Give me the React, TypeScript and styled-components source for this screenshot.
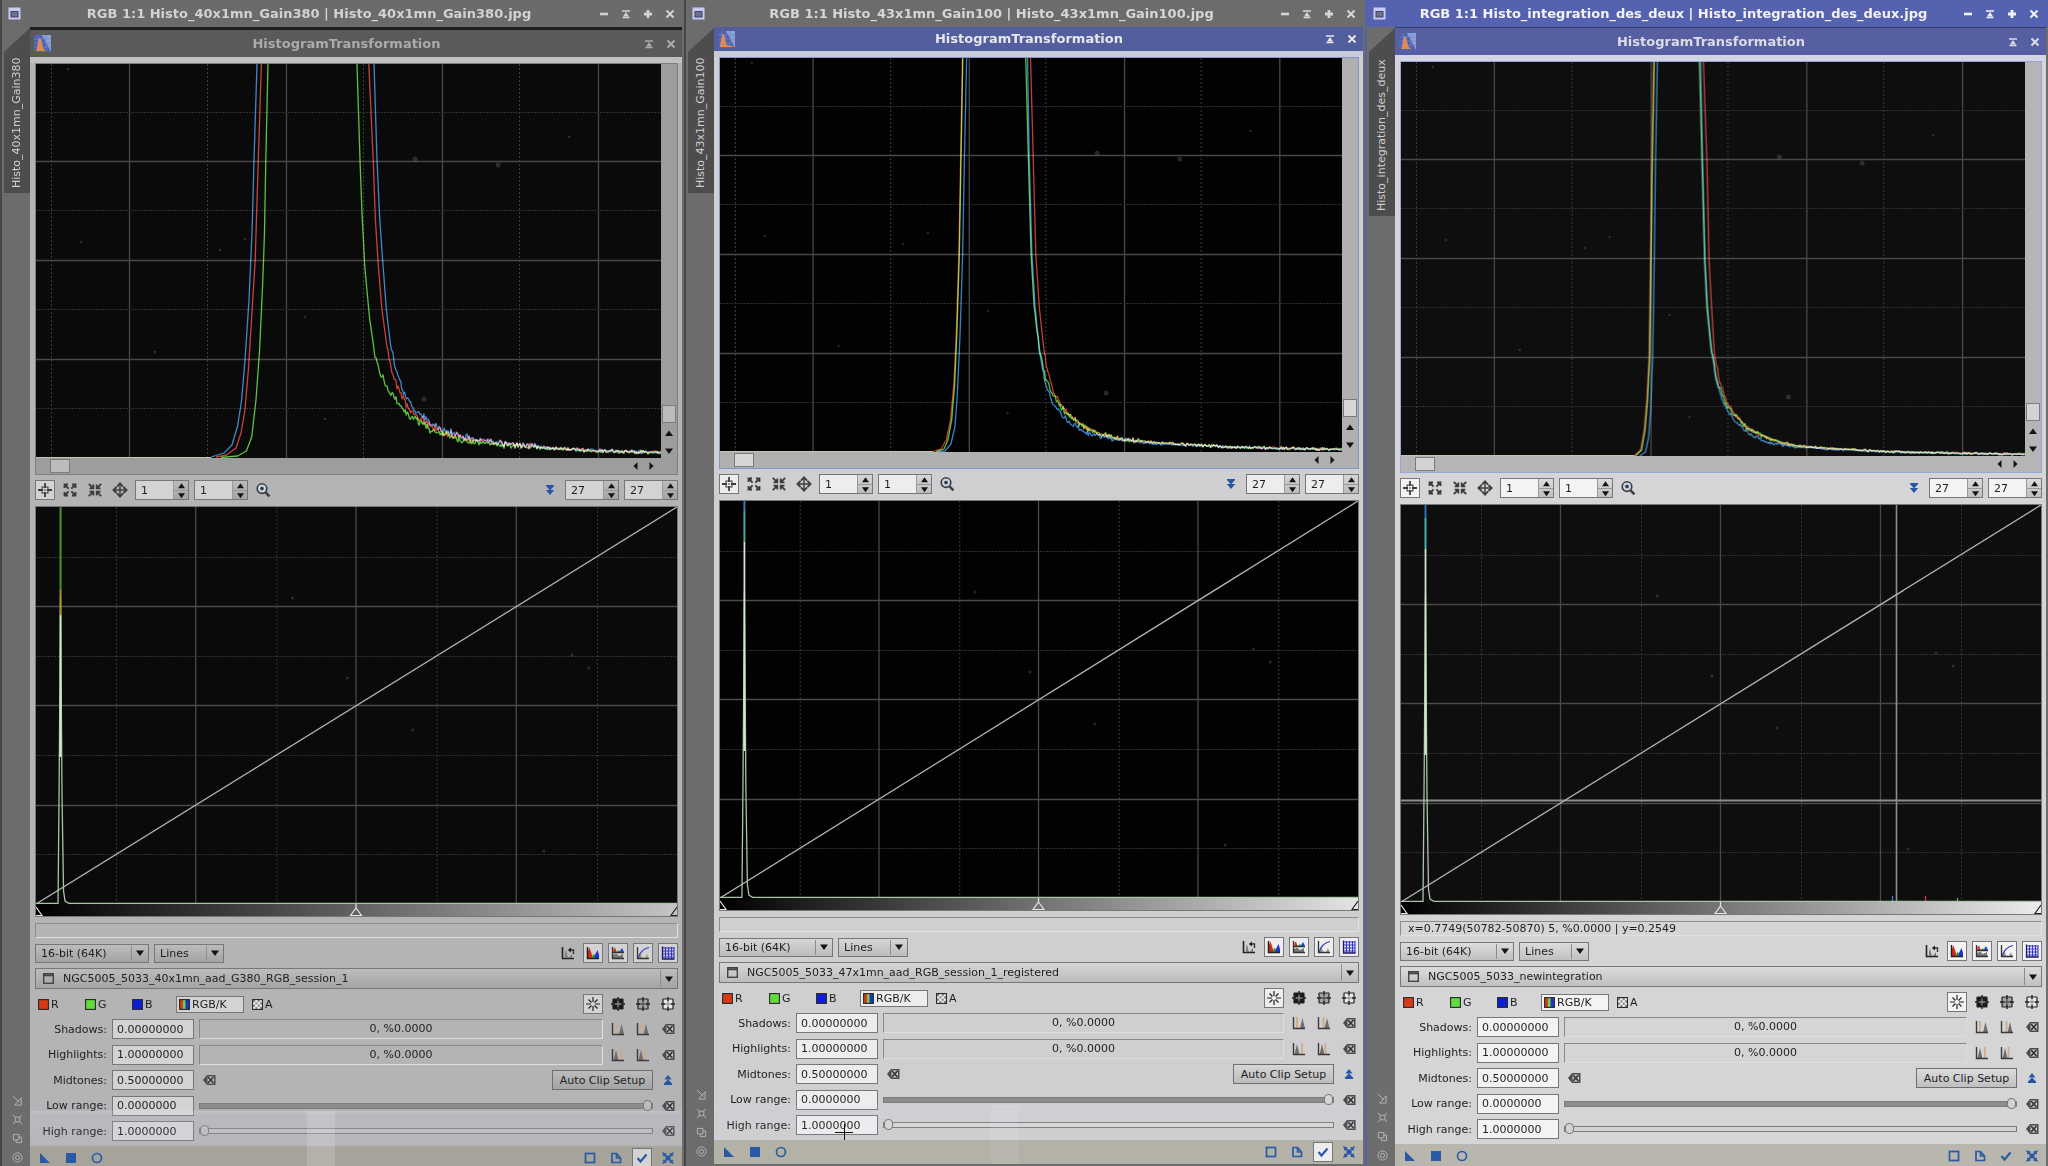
import React, { useId, useState } from "react";
import styled, { createGlobalStyle, ThemeProvider } from "styled-components";

/* ---------- themes ---------- */

type Skin = {
  bar: string;
  barText: string;
  barLine: string;
  sub: string;
  subText: string;
  panel: string;
  panelTop: string;
  frame: string;
  scroll: string;
  thumb: string;
  field: string;
  plot: string;
  footer: string;
  edge: string;
  strip: string;
  text: string;
  grad: string;
  btn: string;
};

const dim: Skin = {
  bar: "#6b6b6b",
  barText: "#d2d2d2",
  barLine: "#1d1d1d",
  sub: "#5a5a5a",
  subText: "#ababab",
  panel: "#b4b4b6",
  panelTop: "#c0c0c2",
  frame: "#7e7e80",
  scroll: "#9d9d9d",
  thumb: "#bcbcbc",
  field: "#d3d3d4",
  plot: "#0a0a0b",
  footer: "#a6a39b",
  edge: "#474747",
  strip: "#6c6c6c",
  text: "#1e1e1e",
  grad: "#c4c4c4",
  btn: "linear-gradient(#bcbcbd, #a4a4a5)",
};

const mid: Skin = {
  bar: "#6c6c6c",
  barText: "#d6d6d6",
  barLine: "#5e5e5e",
  sub: "#525e9d",
  subText: "#e6e6ec",
  panel: "#cfcfd1",
  panelTop: "#c9cbdb",
  frame: "#8095c8",
  scroll: "#b0b0b0",
  thumb: "#d6d6d6",
  field: "#ededee",
  plot: "#020203",
  footer: "#b4b1a6",
  edge: "#474747",
  strip: "#6c6c6c",
  text: "#1e1e1e",
  grad: "#e4e4e4",
  btn: "linear-gradient(#d6d6d7, #bcbcbd)",
};

const bright: Skin = {
  bar: "#5462b0",
  barText: "#f2f2f6",
  barLine: "#33396a",
  sub: "#555fa2",
  subText: "#dcdce6",
  panel: "#d5d5d7",
  panelTop: "#d3d5e2",
  frame: "#93a9da",
  scroll: "#b5b5b5",
  thumb: "#d3d3d3",
  field: "#f3f3f4",
  plot: "#0e0e0f",
  footer: "#b8b6ad",
  edge: "#5560a6",
  strip: "#6d6d6d",
  text: "#1e1e1e",
  grad: "#ececec",
  btn: "linear-gradient(#dcdcdd, #c0c0c1)",
};

type T = { theme: Skin };

/* ---------- styled parts ---------- */

const GlobalStyle = createGlobalStyle`
  *, *::before, *::after { box-sizing: border-box; }
  html, body { margin: 0; height: 100%; background: #6b6b6b; overflow: hidden; }
  body, button, input, select { font-family: "DejaVu Sans", Verdana, sans-serif; font-size: 11px; }
  button { padding: 0; margin: 0; cursor: default; color: inherit; }
  svg { display: block; flex: none; }
`;

const Desktop = styled.main`
  display: grid;
  grid-template-columns: 684fr 681fr 683fr;
  height: 100vh;
  overflow: hidden;
`;

const Window = styled.section<{ $end: number }>`
  display: flex;
  flex-direction: column;
  min-width: 0;
  height: max-content;
  background: ${(p: T) => p.theme.strip};
  border-left: 2px solid ${(p: T) => p.theme.edge};
  padding-bottom: ${(p) => p.$end}px;
  color: ${(p: T) => p.theme.text};
`;

const TitleBar = styled.header`
  display: flex;
  align-items: center;
  height: 27px;
  padding: 0 7px 0 6px;
  background: ${(p: T) => p.theme.bar};
  color: ${(p: T) => p.theme.barText};
`;

const TitleText = styled.h1`
  flex: 1;
  margin: 0;
  font-size: 13px;
  line-height: 16px;
  font-weight: bold;
  text-align: center;
  white-space: nowrap;
`;

const TitleButtons = styled.div`
  display: flex;
  gap: 8px;
`;

const BareButton = styled.button`
  display: flex;
  align-items: center;
  justify-content: center;
  width: 14px;
  height: 14px;
  border: 0;
  background: none;
`;

const Body = styled.div`
  display: flex;
  flex: 1;
  align-items: stretch;
`;

const SideStrip = styled.aside`
  display: flex;
  flex: none;
  flex-direction: column;
  justify-content: space-between;
  align-items: center;
  width: 28px;
  padding: 1px 0 6px 2px;
  color: #b9b9b9;
`;

const SideTab = styled.div<{ $long?: boolean }>`
  display: flex;
  align-items: center;
  align-self: stretch;
  justify-content: flex-start;
  height: ${(p) => (p.$long ? 188 : 165)}px;
  padding: 5px 0 0;
  writing-mode: vertical-rl;
  transform: rotate(180deg);
  background: #4d4d4d;
  clip-path: polygon(0 0, 100% 0, 100% calc(100% - 24px), 0 100%);
  color: #d0d0d0;
  line-height: 14px;
  white-space: nowrap;
`;

const SideIcons = styled.div`
  display: flex;
  flex-direction: column;
  align-items: center;
  gap: 5px;
`;

const Tool = styled.div<{ $line: number }>`
  position: relative;
  display: flex;
  flex: 1;
  flex-direction: column;
  min-width: 0;
  margin-right: 2px;
  border-top: ${(p) => p.$line}px solid ${(p: T) => p.theme.barLine};
  background: ${(p: T) => p.theme.panel};
`;

const SubBar = styled.header<{ $h: number }>`
  display: flex;
  align-items: center;
  height: ${(p) => p.$h}px;
  padding: 0 4px 0 4px;
  background: ${(p: T) => p.theme.sub};
  color: ${(p: T) => p.theme.subText};
`;

const SubTitle = styled.h2`
  flex: 1;
  margin: 0;
  font-size: 13px;
  line-height: 16px;
  font-weight: bold;
  text-align: center;
`;

const Content = styled.div`
  display: flex;
  flex-direction: column;
  gap: 5px;
  padding: 6px 4px 5px 5px;
  background: linear-gradient(${(p: T) => p.theme.panelTop} 6px, transparent 6px);
`;

const ScrollFrame = styled.div`
  display: grid;
  grid-template-columns: 1fr 16px;
  border: 1px solid ${(p: T) => p.theme.frame};
  background: ${(p: T) => p.theme.scroll};
`;

const PlotArea = styled.div<{ $h: number }>`
  min-width: 0;
  height: ${(p) => p.$h}px;
  background: ${(p: T) => p.theme.plot};
`;

const VScroll = styled.div`
  display: flex;
  flex-direction: column;
  justify-content: flex-end;
  align-items: center;
`;

const HScroll = styled.div`
  display: flex;
  grid-column: 1 / -1;
  align-items: center;
  justify-content: space-between;
  height: 16px;
  padding: 0 18px 0 14px;
`;

const Knob = styled.div<{ $w: number; $h: number }>`
  width: ${(p) => p.$w}px;
  height: ${(p) => p.$h}px;
  border: 1px solid #7c7c7c;
  background: ${(p: T) => p.theme.thumb};
`;

const ArrowPair = styled.div<{ $col?: boolean }>`
  display: flex;
  flex-direction: ${(p) => (p.$col ? "column" : "row")};
  gap: ${(p) => (p.$col ? 4 : 3)}px;
  margin-top: ${(p) => (p.$col ? 3 : 0)}px;
`;

const Row = styled.div`
  display: flex;
  align-items: center;
  gap: 5px;
  height: 20px;
`;

const Spacer = styled.div`
  flex: 1;
`;

const IconButton = styled.button<{ $on?: boolean }>`
  display: flex;
  align-items: center;
  justify-content: center;
  flex: none;
  width: 20px;
  height: 20px;
  border: 1px solid ${(p) => (p.$on ? "#77777a" : "transparent")};
  background: ${(p) => (p.$on ? (p.theme as Skin).field : "none")};
`;

const SpinBox = styled.div`
  display: flex;
  flex: none;
  width: 54px;
  height: 20px;
  border: 1px solid #77777a;
  background: ${(p: T) => p.theme.field};
`;

const SpinInput = styled.input`
  flex: 1;
  min-width: 0;
  padding: 0 5px;
  border: 0;
  outline: 0;
  background: none;
  color: ${(p: T) => p.theme.text};
`;

const SpinButtons = styled.div`
  display: grid;
  width: 15px;
  grid-template-rows: 1fr 1fr;
  border-left: 1px solid #9a9a9a;
  background: ${(p: T) => p.theme.btn};
`;

const SpinStep = styled.button`
  display: flex;
  align-items: center;
  justify-content: center;
  border: 0;
  background: none;
  & + & {
    border-top: 1px solid #9a9a9a;
  }
`;

const MainPlot = styled.div`
  display: flex;
  flex-direction: column;
  margin: 1px 0 1px 0;
  border: 1px solid #77777a;
`;

const Ramp = styled.div`
  height: 12px;
  background: linear-gradient(90deg, #000, ${(p: T) => p.theme.grad});
`;

const Status = styled.output`
  display: block;
  height: 15px;
  padding: 0 7px;
  border: 1px solid;
  border-color: #8c8c8e #e0e0e2 #e0e0e2 #8c8c8e;
  font-size: 11px;
  line-height: 13px;
  white-space: nowrap;
`;

const SelectWrap = styled.div<{ $w?: number }>`
  position: relative;
  display: flex;
  height: ${(p) => (p.$w ? 19 : 21)}px;
  width: ${(p) => (p.$w ? p.$w + "px" : "auto")};
`;

const Select = styled.select<{ $pad: number }>`
  flex: 1;
  appearance: none;
  min-width: 0;
  padding: 0 20px 0 ${(p) => p.$pad}px;
  border: 1px solid #77777a;
  border-radius: 0;
  background: ${(p: T) => p.theme.btn};
  color: ${(p: T) => p.theme.text};
`;

const SelectArrow = styled.span`
  position: absolute;
  top: 2px;
  right: 1px;
  bottom: 2px;
  display: flex;
  align-items: center;
  justify-content: center;
  width: 17px;
  border-left: 1px solid #8c8c8c;
  pointer-events: none;
`;

const SelectIcon = styled.span`
  position: absolute;
  top: 5px;
  left: 8px;
  pointer-events: none;
`;

const Channels = styled.div`
  display: flex;
  align-items: center;
`;

const Channel = styled.button<{ $on?: boolean; $w: number }>`
  display: flex;
  align-items: center;
  gap: 2px;
  width: ${(p) => p.$w}px;
  height: 17px;
  padding-left: 2px;
  border: 1px solid ${(p) => (p.$on ? "#77777a" : "transparent")};
  background: ${(p) => (p.$on ? (p.theme as Skin).field : "none")};
`;

const Params = styled.div`
  display: flex;
  flex-direction: column;
  justify-content: space-between;
  min-height: 122px;
`;

const ParamLabel = styled.label`
  flex: none;
  width: 72px;
  text-align: right;
  white-space: nowrap;
`;

const ParamInput = styled.input`
  flex: none;
  width: 82px;
  height: 20px;
  padding: 0 4px;
  border: 1px solid #77777a;
  outline: 0;
  background: ${(p: T) => p.theme.field};
  color: ${(p: T) => p.theme.text};
`;

const Readout = styled.div`
  flex: 1;
  height: 20px;
  border: 1px solid;
  border-color: #88888a #dedee0 #dedee0 #88888a;
  line-height: 18px;
  text-align: center;
`;

const ClipButton = styled.button`
  width: 101px;
  height: 20px;
  border: 1px solid #6e6e70;
  background: ${(p: T) => p.theme.btn};
`;

const Slider = styled.input<{ $full?: boolean }>`
  flex: 1;
  min-width: 0;
  height: 12px;
  margin: 0;
  appearance: none;
  background: none;
  &::-webkit-slider-runnable-track {
    height: 6px;
    border: 1px solid #7c7c7e;
    background: ${(p) => (p.$full ? "#8c8c8d" : (p.theme as Skin).thumb)};
  }
  &::-webkit-slider-thumb {
    appearance: none;
    width: 9px;
    height: 11px;
    margin-top: -4px;
    border: 1px solid #77777a;
    border-radius: 4px;
    background: ${(p: T) => p.theme.thumb};
  }
`;

const Footer = styled.footer`
  display: flex;
  align-items: center;
  gap: 6px;
  height: 24px;
  padding: 0 4px 0 5px;
  background: ${(p: T) => p.theme.footer};
`;

const Ghost = styled.div<{ $faint?: boolean }>`
  position: absolute;
  right: 0;
  bottom: 0;
  left: 0;
  height: 59px;
  opacity: ${(p) => (p.$faint ? 0.5 : 1)};
  pointer-events: none;
  background:
    linear-gradient(rgba(255, 255, 255, 0.16), rgba(255, 255, 255, 0.16)) 277px 0 / 28px 100% no-repeat,
    linear-gradient(rgba(225, 225, 255, 0.3), rgba(225, 225, 255, 0.12) 4px, rgba(225, 225, 255, 0.06) 36px, transparent 36px);
`;

const Pointer = styled.svg`
  position: absolute;
  left: 121px;
  bottom: 23px;
  pointer-events: none;
`;

/* ---------- icons ---------- */

const Tri = ({ d, s = 8 }: { d: "up" | "down" | "left" | "right"; s?: number }) => {
  const shape = {
    up: "0,7 4,1.5 8,7",
    down: "0,1.5 4,7 8,1.5",
    left: "6.5,0 2.5,4 6.5,8",
    right: "1.5,0 5.5,4 1.5,8",
  }[d];
  return (
    <svg width={s} height={s} viewBox="0 0 8 8">
      <polygon points={shape} fill="#141414" />
    </svg>
  );
};

const Minimize = () => (
  <svg width="12" height="12" viewBox="0 0 12 12"><path d="M2 6h8" stroke="currentColor" strokeWidth="2.6" /></svg>
);
const Shade = () => (
  <svg width="12" height="12" viewBox="0 0 12 12">
    <path d="M2 3h8M2.5 9.5h7" stroke="currentColor" strokeWidth="1.6" /><path d="M6 4l3 4.500H3z" fill="currentColor" />
  </svg>
);
const Plus = () => (
  <svg width="12" height="12" viewBox="0 0 12 12"><path d="M2 6h8M6 2v8" stroke="currentColor" strokeWidth="2.8" /></svg>
);
const Close = () => (
  <svg width="12" height="12" viewBox="0 0 12 12"><path d="M2.5 2.500l7 7M9.5 2.500l-7 7" stroke="currentColor" strokeWidth="2" /></svg>
);

const WindowMark = () => (
  <svg width="13" height="13" viewBox="0 0 13 13">
    <rect x="0.5" y="0.5" width="12" height="12" fill="#c9cbf4" />
    <rect x="3" y="4.5" width="7" height="5.5" fill="#70728c" stroke="#3f4166" strokeWidth="1" />
  </svg>
);

const ToolMark = ({ tail }: { tail?: boolean }) => (
  <svg width="17" height="17" viewBox="0 0 17 17">
    <rect width="17" height="17" fill="#4a5fb0" />
    <path d="M8 0h9v17z" fill="#8ea2d8" />
    <path d="M0 4h17M0 8h17M0 12h17M4 0v17M8 0v17M12 0v17" stroke="#7384c6" strokeWidth="0.7" />
    <path
      d={tail ? "M1 16C3 15 3 4 5 3s2 9 4 11l6 1v1z" : "M2 16C4 13 4 4 5.5 3S8 9 9 12s2 3 3 4z"}
      fill="#e08a55"
    />
  </svg>
);

const ink = "#3c3c3e";

const Crosshair = () => (
  <svg width="16" height="16" viewBox="0 0 16 16" fill="none" stroke={ink}>
    <path d="M8 1v5M8 10v5M1 8h5M10 8h5" strokeWidth="1.8" />
    <rect x="5" y="5" width="6" height="6" strokeWidth="1" />
    <rect x="7.3" y="7.3" width="1.4" height="1.4" fill={ink} stroke="none" />
  </svg>
);
const ZoomOutArrows = () => (
  <svg width="14" height="14" viewBox="0 0 14 14" fill="none" stroke={ink} strokeWidth="1.800">
    <path d="M1.5 5V1.500H5M9 1.500h3.500V5M12.500 9v3.500H9M5 12.500H1.500V9M2 2l3.600 3.600M12 2L8.400 5.600M12 12L8.400 8.400M2 12l3.600-3.600" />
  </svg>
);
const ZoomInArrows = () => (
  <svg width="14" height="14" viewBox="0 0 14 14" fill="none" stroke={ink} strokeWidth="1.800">
    <path d="M1.500 5.300h3.800V1.500M8.700 1.500v3.800h3.800M12.500 8.700H8.700v3.800M5.300 12.500V8.700H1.500M.8.8l4 4M13.200.8l-4 4M13.200 13.200l-4-4M.8 13.200l4-4" />
  </svg>
);
const Pan = () => (
  <svg width="16" height="16" viewBox="0 0 16 16" fill="none" stroke={ink}>
    <path d="M8 3v10M3 8h10" strokeWidth="1.4" />
    <path d="M5 4.600L8 1.400l3 3.200M5 11.400l3 3.200 3-3.200M4.600 5L1.400 8l3.200 3M11.400 5l3.200 3-3.200 3" strokeWidth="1.800" />
  </svg>
);
const Magnifier = () => (
  <svg width="16" height="16" viewBox="0 0 16 16" fill="none">
    <circle cx="7" cy="6.600" r="4.800" stroke={ink} strokeWidth="1.600" fill="#c9d3dd" />
    <circle cx="7" cy="6.600" r="1.800" fill="#26364e" />
    <path d="M10.600 10.400l3.800 4" stroke={ink} strokeWidth="2.400" />
  </svg>
);
const DoubleArrow = ({ up }: { up?: boolean }) => (
  <svg width="12" height="12" viewBox="0 0 12 12" fill="#2456a4">
    <path d={up ? "M6 1l3.500 4.500h-7zM6 5.500l4.500 4.500h-9zM2 10h8v1H2z" : "M2 1h8v1H2zM2 2h8L6 6.500zM1.800 6h8.400L6 11z"} />
  </svg>
);

const AxisRestore = () => (
  <svg width="14" height="14" viewBox="0 0 14 14" fill="none">
    <path d="M1.500 1v11.500H13" stroke="#222" strokeWidth="1.600" />
    <path d="M4 12V8l1-4 1 5 1 3zM8 12l3-4v4z" fill="#777" />
    <path d="M12.500 8V4H9" stroke="#333" strokeWidth="1.400" /><path d="M10 1.500v5L6.800 4z" fill="#222" />
  </svg>
);
const RgbHisto = () => (
  <svg width="14" height="14" viewBox="0 0 14 14">
    <path d="M2 12V5l1.500-3.500L6 9l1 3z" fill="#d42a18" /><path d="M6 12l1-4 2 1 1 3z" fill="#27a32b" />
    <path d="M8.500 12l.5-3 2.500-5 1.500 5v3z" fill="#1c32d8" />
    <path d="M1.500 1v11.500H13" stroke="#222" strokeWidth="1.500" fill="none" />
  </svg>
);
const SplitHisto = () => (
  <svg width="14" height="14" viewBox="0 0 14 14">
    <path d="M2.500 6V3L4 1.500 5.500 6z" fill="#d42a18" /><path d="M5.500 6L8 4l1 2z" fill="#27a32b" />
    <path d="M8.500 6L11 2l2 4z" fill="#1c46d8" />
    <path d="M2 12V9l3-1.500L8 10l4-2v4z" fill="#777" />
    <path d="M1.500 1v11.500H13M2 6.500h11" stroke="#333" strokeWidth="1.300" fill="none" />
  </svg>
);
const CurveHisto = () => (
  <svg width="14" height="14" viewBox="0 0 14 14" fill="none">
    <path d="M3 12V8l1.500-2L6 12zM9 12l2-4 1.500 4z" fill="#9b9b8c" />
    <path d="M2 12C4 6 8 2.500 13 1.500" stroke="#3546c4" strokeWidth="1.200" />
    <path d="M1.500 1v11.500H13" stroke="#333" strokeWidth="1.300" />
  </svg>
);
const GridIcon = () => (
  <svg width="14" height="14" viewBox="0 0 14 14" fill="none">
    <path d="M4.500 1v12M7.500 1v12M10.500 1v12M13 1v12M1 2h12M1 5h12M1 8h12M1 11h12" stroke="#3436c8" strokeWidth="1.100" />
    <path d="M1.500 0.500v12.500H13.500" stroke="#1c1c60" strokeWidth="1.300" />
  </svg>
);

const Burst = () => (
  <svg width="14" height="14" viewBox="0 0 14 14" stroke="#222" strokeWidth="1.200">
    <path d="M7 0v5M7 9v5M0 7h5M9 7h5M2.500 2.500l3 3M11.500 2.500l-3 3M11.500 11.500l-3-3M2.500 11.500l3-3" />
  </svg>
);
const Target = ({ fill, cross }: { fill: string; cross: string }) => (
  <svg width="14" height="14" viewBox="0 0 14 14">
    <rect x="2" y="2" width="10" height="10" rx="0.500" fill={fill} stroke="#222" strokeWidth="1.200" />
    <path d="M7 2.600v8.800M2.600 7h8.800" stroke={cross} strokeWidth="1.300" />
    <path d="M7 0v4M7 10V14M0 7h4M10 7H14" stroke="#222" strokeWidth="1.400" />
  </svg>
);

const ClipIcon = ({ x, peak }: { x: number; peak: number }) => (
  <svg width="14" height="14" viewBox="0 0 14 14" fill="none">
    <path d={`M${peak - 2.5} 12.500L${peak} 2l2.500 10.500z`} fill="#6e6e6e" />
    <path d={`M${x} 1v11.500`} stroke="#d3aa84" strokeWidth="1.800" />
    <path d="M1.500 1v11.500H13" stroke="#3a3a3a" strokeWidth="1.400" />
  </svg>
);

const ClearIcon = () => (
  <svg width="13" height="12" viewBox="0 0 13 12">
    <path d="M0 6l4-5h8.500v10H4z" fill="#4c4c4e" />
    <rect x="4.500" y="2.500" width="6.500" height="7" fill="#c9c9ca" />
    <path d="M5 3l5.500 6M10.500 3L5 9" stroke="#333" strokeWidth="1.700" />
  </svg>
);

const ImageMark = () => (
  <svg width="11" height="11" viewBox="0 0 11 11">
    <rect x="0.700" y="0.700" width="9.600" height="9.600" fill="none" stroke="#444" strokeWidth="1.400" />
    <path d="M1 2.300h9" stroke="#444" strokeWidth="2" />
  </svg>
);

const Swatch = ({ kind }: { kind: string }) => (
  <svg width="11" height="11" viewBox="0 0 11 11">
    {kind === "rgb" ? (
      <>
        <rect x="1" y="1" width="3" height="9" fill="#d83a1c" /><rect x="4" y="1" width="3" height="9" fill="#62d84a" />
        <rect x="6.500" y="1" width="3.500" height="9" fill="#1a34c8" />
      </>
    ) : kind === "alpha" ? (
      <>
        <rect x="1" y="1" width="9" height="9" fill="#f2f2f2" />
        {[0, 1, 2, 3].map((r) =>
          [0, 1, 2, 3].map((c) =>
            (r + c) % 2 ? null : <rect key={`${r}${c}`} x={1 + c * 2.3} y={1 + r * 2.3} width="2.200" height="2.200" fill="#8b8b8b" />
          )
        )}
      </>
    ) : (
      <rect x="1" y="1" width="9" height="9" fill={kind} />
    )}
    <rect x="0.600" y="0.600" width="9.800" height="9.800" fill="none" stroke="#262626" strokeWidth="1.100" />
  </svg>
);

const blue = "#2a5aa6";
const NewInstance = () => (
  <svg width="12" height="12" viewBox="0 0 12 12"><path d="M1 1v10h10z" fill={blue} /></svg>
);
const ApplyIcon = () => (
  <svg width="12" height="12" viewBox="0 0 12 12"><rect x="1" y="1" width="10" height="10" fill={blue} /></svg>
);
const PreviewIcon = () => (
  <svg width="12" height="12" viewBox="0 0 12 12"><circle cx="6" cy="6" r="4.500" fill="none" stroke={blue} strokeWidth="1.700" /></svg>
);
const BoxIcon = () => (
  <svg width="12" height="12" viewBox="0 0 12 12"><rect x="1.500" y="1.500" width="9" height="9" fill="none" stroke={blue} strokeWidth="1.700" /></svg>
);
const DocIcon = () => (
  <svg width="12" height="12" viewBox="0 0 12 12">
    <path d="M2 1.500h4.500L10.500 6v4.500H2zM6.500 1.500V6h4" fill="none" stroke={blue} strokeWidth="1.700" />
  </svg>
);
const CheckIcon = () => (
  <svg width="12" height="12" viewBox="0 0 12 12"><path d="M1.500 6l3 3.500 6-7" fill="none" stroke={blue} strokeWidth="2.200" /></svg>
);
const ResetIcon = () => (
  <svg width="14" height="14" viewBox="0 0 14 14">
    <rect x="4.500" y="4.500" width="5" height="5" fill={blue} />
    <path d="M2 4.500h2.500V2M9.500 2v2.500H12M12 9.500H9.500V12M4.500 12V9.500H2M1.500 1.500l3 3M12.500 1.500l-3 3M12.500 12.500l-3-3M1.500 12.500l3-3" fill="none" stroke={blue} strokeWidth="1.500" />
  </svg>
);

const sideShapes = [
  "M1 1l7 7M10 3v8H3M10 3L3 11",
  "M1 1l2.500 2.500M11 1L8.500 3.500M11 11L8.500 8.500M1 11l2.500-2.500M3.500 3.500h5v5h-5z",
  "M1.500 1.500h6v6h-6zM7.500 4.500h3v6h-6v-3",
];
const SideGlyphs = () => (
  <SideIcons>
    {sideShapes.map((d) => (
      <BareButton key={d} aria-label="Window option">
        <svg width="11" height="11" viewBox="0 0 12 12" fill="none" stroke="currentColor"><path d={d} /></svg>
      </BareButton>
    ))}
    <BareButton aria-label="Pin window">
      <svg width="11" height="11" viewBox="0 0 12 12" fill="none" stroke="currentColor">
        <circle cx="6" cy="6" r="5" /><circle cx="6" cy="6" r="2.300" />
      </svg>
    </BareButton>
  </SideIcons>
);

/* ---------- charts ---------- */

type Pt = [number, number];
type Curve = { color: string; left: Pt[]; right: Pt[]; seed: number };

const wobble = (i: number, seed: number) => {
  const v = Math.sin(i * 12.9898 + seed * 78.233) * 43758.5453;
  return (v - Math.floor(v)) * 2 - 1;
};

/* Straight in the steep part, one jittered sample per pixel in the tail. */
const trace = (pts: Pt[], seed: number, amp: number) => {
  let d = `M${pts[0][0]} ${pts[0][1]}`;
  for (let k = 1; k < pts.length; k++) {
    const [x0, y0] = pts[k - 1];
    const [x1, y1] = pts[k];
    if (y1 < 290 || x1 < x0 || amp === 0) {
      d += `L${x1} ${y1}`;
      continue;
    }
    const n = Math.max(1, Math.round(x1 - x0));
    for (let i = 1; i <= n; i++) {
      const x = x0 + ((x1 - x0) * i) / n;
      const y = y0 + ((y1 - y0) * i) / n;
      const a = amp * (y < 375 ? 1.2 : y < 383 ? 0.9 : 0.55);
      const shared = wobble(Math.round(x), 1) * 0.4;
      d += `L${x.toFixed(1)} ${(y + a * (shared + wobble(Math.round(x), seed) * 0.8)).toFixed(1)}`;
    }
  }
  return d;
};

const RED = "#c23c2c";
const GREEN = "#55bf38";
const BLUE = "#3a80c6";

const shots: Pt[] = [
  [32, 5], [379, 95], [462, 101], [533, 73], [45, 178], [209, 175], [184, 186], [269, 253], [388, 335], [289, 355], [119, 288],
];

const ZoomPlot = ({ curves, amp }: { curves: Curve[]; amp: number }) => (
  <svg width="100%" height="100%" viewBox="0 0 625 394" preserveAspectRatio="none" fill="none" role="img" aria-label="Input histogram">
    {[15, 171, 327, 483].map((x) => (
      <path key={x} d={`M${x}.5 0V394`} stroke="#3c3c3c" strokeDasharray="2 2" />
    ))}
    {[93, 250, 406, 562].map((x) => (
      <path key={x} d={`M${x}.5 0V394`} stroke="#484848" strokeWidth="1.300" />
    ))}
    {[48, 146, 245, 344].map((y) => (
      <path key={y} d={`M0 ${y}.5H625`} stroke="#303030" strokeDasharray="2 1" />
    ))}
    {[97, 196, 295].map((y) => (
      <path key={y} d={`M0 ${y}.5H625`} stroke="#484848" strokeWidth="1.300" />
    ))}
    {shots.map(([x, y]) => (
      <circle key={x} cx={x} cy={y} r={x > 370 && x < 470 ? 2.5 : 1.3} fill="#8a8a8a" opacity="0.28" />
    ))}
    <path d={`M0 393.500H${curves[0].left[curves[0].left.length - 1][0]}`} stroke="#b9c9b2" strokeWidth="1" />
    <g style={{ mixBlendMode: "screen" }}>
      {curves.map((c) => (
        <g key={c.color} stroke={c.color} strokeWidth="1.300" strokeLinejoin="round" style={{ mixBlendMode: "screen" }}>
          <path d={trace(c.left, c.seed, 0)} />
          <path d={trace(c.right, c.seed, amp)} />
        </g>
      ))}
    </g>
  </svg>
);

const FullPlot = ({ tip, readout }: { tip: [string, string, number, number]; readout?: boolean }) => (
  <svg width="100%" height="100%" viewBox="0 0 640 397" preserveAspectRatio="none" fill="none" role="img" aria-label="Output histogram and transfer curve">
    {[1, 3, 5, 7].map((k) => (
      <g key={k}>
        <path d={`M${k * 80}.5 0V397`} stroke="#3a3a3a" strokeDasharray="2 2" />
        <path d={`M0 ${Math.round(k * 49.6)}.5H640`} stroke="#303030" strokeDasharray="2 1" />
      </g>
    ))}
    {[2, 4, 6].map((k) => (
      <g key={k}>
        <path d={`M${k * 80 - 1}.5 0V397`} stroke="#4a4a4a" strokeWidth="1.300" />
        <path d={`M0 ${Math.round(k * 49.6)}.5H640`} stroke="#4a4a4a" strokeWidth="1.300" />
      </g>
    ))}
    {[[256, 91], [311, 171], [552, 161], [376, 223], [507, 344], [535, 148]].map(([x, y]) => (
      <circle key={x} cx={x} cy={y} r="1.500" fill="#8a8a8a" opacity="0.28" />
    ))}
    {readout && (
      <g>
        <path d="M495.500 0V397" stroke="#8d8d8d" strokeWidth="1.600" />
        <path d="M0 295.500H640" stroke="#8d8d8d" strokeWidth="2" />
        <path d="M491.500 391V396" stroke="#3d83cc" strokeWidth="1.300" />
        <path d="M524.500 391V396" stroke="#c8402f" strokeWidth="1.300" />
        <path d="M556.500 393V396" stroke="#55c234" strokeWidth="1.300" />
      </g>
    )}
    <path d="M0 397L640 0" stroke="#b2b2b2" strokeWidth="1.300" />
    <path d="M0 396.500H22L23 290L24.500 90L26 290L27.500 384L29 394L33 396.500H640" stroke="#a9c4a6" strokeWidth="1.300" />
    <path d={`M24.500 ${tip[3]}V250`} stroke="#d3e6cf" strokeWidth="1.800" />
    <path d={`M24.500 0V${tip[2]}`} stroke={tip[0]} strokeWidth="2" />
    <path d={`M24.500 ${tip[2]}V${tip[3]}`} stroke={tip[1]} strokeWidth="2" />
  </svg>
);

const Markers = () => (
  <svg width="100%" height="12" viewBox="0 0 640 12" preserveAspectRatio="none" fill="none" strokeWidth="1.200">
    <path d="M0 3L6 11.500H0" stroke="#e6e6e6" />
    <path d="M319.500 0V4L314 11.500H325L319.500 4" stroke="#e6e6e6" />
    <path d="M640 3L634 11.500H640" stroke="#222" />
  </svg>
);

/* ---------- controls ---------- */

const Spin = ({ label, value }: { label: string; value: string }) => {
  const [v, setV] = useState(value);
  const step = (n: number) => setV(String(Number(v) + n));
  return (
    <SpinBox>
      <SpinInput aria-label={label} value={v} onChange={(e) => setV(e.target.value)} />
      <SpinButtons>
        <SpinStep aria-label={`${label} up`} onClick={() => step(1)}><Tri d="up" s={7} /></SpinStep>
        <SpinStep aria-label={`${label} down`} onClick={() => step(-1)}><Tri d="down" s={7} /></SpinStep>
      </SpinButtons>
    </SpinBox>
  );
};

const Drop = ({ label, value, width, icon }: { label: string; value: string; width?: number; icon?: React.ReactNode }) => (
  <SelectWrap $w={width}>
    {icon && <SelectIcon>{icon}</SelectIcon>}
    <Select aria-label={label} $pad={icon ? 27 : 5} defaultValue={value}>
      <option>{value}</option>
    </Select>
    <SelectArrow><Tri d="down" /></SelectArrow>
  </SelectWrap>
);

const Param = ({ label, value, children }: { label: string; value: string; children: React.ReactNode }) => {
  const id = useId();
  return (
    <Row>
      <ParamLabel htmlFor={id}>{label}</ParamLabel>
      <ParamInput id={id} defaultValue={value} />
      {children}
    </Row>
  );
};

const Clear = () => <IconButton aria-label="Reset value"><ClearIcon /></IconButton>;

type PanelData = {
  skin: Skin;
  title: string;
  tab: string;
  image: string;
  status?: string;
  line: number;
  subHeight: number;
  end: number;
  longTab?: boolean;
  tail?: boolean;
  checked?: boolean;
  cursor?: boolean;
  ghost?: "strong" | "faint";
  amp: number;
  curves: Curve[];
  tip: [string, string, number, number];
};

const HistogramWindow = (p: PanelData) => (
  <ThemeProvider theme={p.skin}>
    <Window $end={p.end}>
      <TitleBar>
        <WindowMark />
        <TitleText>{p.title}</TitleText>
        <TitleButtons>
          <BareButton aria-label="Minimize"><Minimize /></BareButton>
          <BareButton aria-label="Shade"><Shade /></BareButton>
          <BareButton aria-label="Maximize"><Plus /></BareButton>
          <BareButton aria-label="Close"><Close /></BareButton>
        </TitleButtons>
      </TitleBar>
      <Body>
        <SideStrip>
          <SideTab $long={p.longTab}>{p.tab}</SideTab>
          <SideGlyphs />
        </SideStrip>
        <Tool $line={p.line}>
          <SubBar $h={p.subHeight}>
            <ToolMark tail={p.tail} />
            <SubTitle>HistogramTransformation</SubTitle>
            <TitleButtons>
              <BareButton aria-label="Shade tool"><Shade /></BareButton>
              <BareButton aria-label="Close tool"><Close /></BareButton>
            </TitleButtons>
          </SubBar>
          <Content>
            <ScrollFrame>
              <PlotArea $h={394}><ZoomPlot curves={p.curves} amp={p.amp} /></PlotArea>
              <VScroll>
                <Knob $w={14} $h={18} />
                <ArrowPair $col>
                  <BareButton aria-label="Scroll up"><Tri d="up" /></BareButton>
                  <BareButton aria-label="Scroll down"><Tri d="down" /></BareButton>
                </ArrowPair>
              </VScroll>
              <HScroll>
                <Knob $w={20} $h={14} />
                <ArrowPair>
                  <BareButton aria-label="Scroll left"><Tri d="left" /></BareButton>
                  <BareButton aria-label="Scroll right"><Tri d="right" /></BareButton>
                </ArrowPair>
              </HScroll>
            </ScrollFrame>
            <Row>
              <IconButton $on aria-label="Readout mode"><Crosshair /></IconButton>
              <IconButton aria-label="Zoom in"><ZoomOutArrows /></IconButton>
              <IconButton aria-label="Zoom out"><ZoomInArrows /></IconButton>
              <IconButton aria-label="Pan"><Pan /></IconButton>
              <Spin label="Horizontal zoom" value="1" />
              <Spin label="Vertical zoom" value="1" />
              <IconButton aria-label="Zoom 1:1"><Magnifier /></IconButton>
              <Spacer />
              <IconButton aria-label="Fold"><DoubleArrow /></IconButton>
              <Spin label="Output horizontal zoom" value="27" />
              <Spin label="Output vertical zoom" value="27" />
            </Row>
            <MainPlot>
              <PlotArea $h={397}><FullPlot tip={p.tip} readout={!!p.status} /></PlotArea>
              <Ramp><Markers /></Ramp>
            </MainPlot>
            <Status>{p.status}</Status>
            <Row>
              <Drop label="Histogram resolution" value="16-bit (64K)" width={114} />
              <Drop label="Plot style" value="Lines" width={70} />
              <Spacer />
              <IconButton aria-label="Reject saturated"><AxisRestore /></IconButton>
              <IconButton $on aria-label="Raw RGB"><RgbHisto /></IconButton>
              <IconButton $on aria-label="Unclipped"><SplitHisto /></IconButton>
              <IconButton $on aria-label="Show curve"><CurveHisto /></IconButton>
              <IconButton $on aria-label="Show grid"><GridIcon /></IconButton>
            </Row>
            <Drop label="Target image" value={p.image} icon={<ImageMark />} />
            <Row>
              <Channels>
                <Channel $w={47}><Swatch kind="#d83a16" />R</Channel>
                <Channel $w={47}><Swatch kind="#62dc3c" />G</Channel>
                <Channel $w={47}><Swatch kind="#0d1fd6" />B</Channel>
                <Channel $w={68} $on><Swatch kind="rgb" />RGB/K</Channel>
              </Channels>
              <Channel $w={40}><Swatch kind="alpha" />A</Channel>
              <Spacer />
              <IconButton $on aria-label="No pick"><Burst /></IconButton>
              <IconButton aria-label="Set black point"><Target fill="#1a1a1a" cross="#8a8a8a" /></IconButton>
              <IconButton aria-label="Set midtones"><Target fill="#a3a3a3" cross="#555" /></IconButton>
              <IconButton aria-label="Set white point"><Target fill="#e8e8e8" cross="#999" /></IconButton>
            </Row>
            <Params>
              <Param label="Shadows:" value="0.00000000">
                <Readout>0, %0.0000</Readout>
                <IconButton aria-label="Auto zero shadows"><ClipIcon x={5} peak={10.5} /></IconButton>
                <IconButton aria-label="Auto clip shadows"><ClipIcon x={6.5} peak={10} /></IconButton>
                <Clear />
              </Param>
              <Param label="Highlights:" value="1.00000000">
                <Readout>0, %0.0000</Readout>
                <IconButton aria-label="Auto zero highlights"><ClipIcon x={10} peak={5} /></IconButton>
                <IconButton aria-label="Auto clip highlights"><ClipIcon x={8.5} peak={5} /></IconButton>
                <Clear />
              </Param>
              <Param label="Midtones:" value="0.50000000">
                <Clear />
                <Spacer />
                <ClipButton>Auto Clip Setup</ClipButton>
                <IconButton aria-label="Collapse"><DoubleArrow up /></IconButton>
              </Param>
              <Param label="Low range:" value="0.0000000">
                <Slider type="range" aria-label="Low range" defaultValue={100} $full />
                <Clear />
              </Param>
              <Param label="High range:" value="1.0000000">
                <Slider type="range" aria-label="High range" defaultValue={0} />
                <Clear />
              </Param>
            </Params>
          </Content>
          <Footer>
            <IconButton aria-label="New instance"><NewInstance /></IconButton>
            <IconButton aria-label="Apply"><ApplyIcon /></IconButton>
            <IconButton aria-label="Real-time preview"><PreviewIcon /></IconButton>
            <Spacer />
            <IconButton aria-label="Browse documentation"><BoxIcon /></IconButton>
            <IconButton aria-label="Edit source"><DocIcon /></IconButton>
            <IconButton $on={p.checked} aria-label="Track view"><CheckIcon /></IconButton>
            <IconButton aria-label="Reset"><ResetIcon /></IconButton>
          </Footer>
          {p.ghost && <Ghost $faint={p.ghost === "faint"} />}
          {p.cursor && (
            <Pointer width="18" height="18" viewBox="0 0 18 18">
              <path d="M9.500 1v16M0 9.500h18" stroke="#111" strokeWidth="1" />
            </Pointer>
          )}
        </Tool>
      </Body>
    </Window>
  </ThemeProvider>
);

/* ---------- data ---------- */

const panels: PanelData[] = [
  {
    skin: dim,
    title: "RGB 1:1 Histo_40x1mn_Gain380 | Histo_40x1mn_Gain380.jpg",
    tab: "Histo_40x1mn_Gain380",
    image: "NGC5005_5033_40x1mn_aad_G380_RGB_session_1",
    line: 3,
    subHeight: 27,
    end: 0,
    checked: true,
    ghost: "strong",
    amp: 3.2,
    tip: ["#3f9a22", "#a39a2c", 83, 108],
    curves: [
      {
        color: BLUE,
        seed: 3,
        left: [[221, 0], [218, 96], [216, 169], [213, 236], [209, 296], [205.6, 336], [201.6, 362], [196, 381], [188, 389], [175, 393]],
        right: [[338, 0], [341, 96], [343.8, 156], [346.4, 193], [350.4, 246], [354.3, 279], [360, 306], [366.6, 326], [377.6, 344], [393, 357.7], [408, 366], [435, 374.3], [470, 380], [514, 384], [558, 386.5], [625, 388.5]],
      },
      {
        color: RED,
        seed: 5,
        left: [[225.4, 0], [222.3, 96], [219.2, 196], [215.7, 253], [212.6, 303], [209, 346], [205, 369], [200, 384], [190.6, 391], [180, 393]],
        right: [[332.8, 0], [337.2, 96], [339.4, 156], [342.4, 203], [346, 246], [351, 283], [357, 313], [365, 331], [375.4, 347.7], [391, 359.3], [408.4, 368.3], [435, 375.3], [470, 380], [514, 384], [558, 386.5], [625, 388.5]],
      },
      {
        color: GREEN,
        seed: 9,
        left: [[232, 0], [229.8, 96], [228.5, 169], [226.7, 219], [223.6, 286], [220, 336], [215.7, 373], [210.4, 387], [201.6, 392], [185, 393.5]],
        right: [[321, 0], [324, 96], [326, 149], [328.8, 203], [332.8, 246], [339, 292], [345, 311], [353, 326], [362, 338], [375.4, 352.7], [393, 364.3], [408, 371], [430, 376.7], [470, 381.7], [514, 384.3], [558, 386.7], [625, 388.7]],
      },
    ],
  },
  {
    skin: mid,
    title: "RGB 1:1 Histo_43x1mn_Gain100 | Histo_43x1mn_Gain100.jpg",
    tab: "Histo_43x1mn_Gain100",
    image: "NGC5005_5033_47x1mn_aad_RGB_session_1_registered",
    line: 0,
    subHeight: 24,
    end: 3,
    tail: true,
    checked: true,
    cursor: true,
    ghost: "faint",
    amp: 2.6,
    tip: ["#3f78b8", "#3fae9c", 10, 41],
    curves: [
      {
        color: RED,
        seed: 3,
        left: [[243.6, 0], [241.8, 99], [240, 196], [237.4, 276], [235, 326], [231.6, 362], [227.4, 382], [222, 391], [214, 393.7]],
        right: [[312, 0], [314.7, 99], [317.3, 196], [320.8, 249], [324.8, 286], [328.8, 312.5], [336, 336], [347, 352.5], [362.6, 367], [382.4, 376], [404, 381], [444, 385], [510, 389], [625, 391.5]],
      },
      {
        color: GREEN,
        seed: 5,
        left: [[244, 0], [242.2, 99], [240.5, 196], [238, 276], [235.8, 326], [232.8, 362], [229, 382], [225, 391], [217, 393.7]],
        right: [[307.2, 0], [309.8, 99], [312.5, 196], [315.6, 249], [320.8, 292], [327, 319], [336, 341], [347, 354], [362.6, 367.5], [382.4, 376], [404, 381], [444, 385], [510, 389], [625, 391.5]],
      },
      {
        color: BLUE,
        seed: 9,
        left: [[247.8, 0], [245.6, 99], [243.8, 196], [241.2, 276], [238.5, 336], [236, 369], [232, 386], [226, 393], [219, 393.7]],
        right: [[309, 0], [310.7, 99], [313.4, 196], [316.6, 249], [320.8, 292], [326, 322.5], [334, 344], [347, 361], [365, 372.5], [382, 378.5], [404, 382], [444, 386], [510, 389], [625, 391.5]],
      },
    ],
  },
  {
    skin: bright,
    title: "RGB 1:1 Histo_integration_des_deux | Histo_integration_des_deux.jpg",
    tab: "Histo_integration_des_deux",
    image: "NGC5005_5033_newintegration",
    status: "x=0.7749(50782-50870) 5, %0.0000 | y=0.2549",
    line: 1,
    subHeight: 27,
    end: 0,
    longTab: true,
    amp: 2,
    tip: ["#2f6fb4", "#3fb3ac", 13, 44],
    curves: [
      {
        color: RED,
        seed: 3,
        left: [[253, 0], [251.2, 98], [249.9, 198], [248.5, 295], [246.2, 338], [243.6, 368], [240, 388], [234, 393.7]],
        right: [[302.8, 0], [306.3, 98], [308.5, 198], [311, 245], [313.7, 290], [319, 318], [326, 340], [334, 352], [346.6, 365.5], [364, 375], [390.5, 383], [421, 385.7], [487, 389.7], [625, 392.3]],
      },
      {
        color: GREEN,
        seed: 5,
        left: [[253.6, 0], [251.7, 98], [250.4, 198], [249, 295], [246.9, 338], [244.4, 368], [241, 388], [235, 393.7]],
        right: [[298.8, 0], [301.4, 98], [304, 198], [306.3, 245], [311, 290], [316.8, 321], [324.7, 341], [333.5, 353], [346.6, 366], [364, 375], [390.5, 383], [421, 385.7], [487, 389.7], [625, 392.3]],
      },
      {
        color: BLUE,
        seed: 9,
        left: [[256.7, 0], [254.9, 98], [253.6, 198], [252, 295], [250, 348], [248, 375], [244.8, 390], [239, 394]],
        right: [[300, 0], [302, 98], [304.5, 198], [307, 245], [311.2, 290], [316.5, 322], [324, 344], [333, 357], [346.6, 370], [364, 379], [390.5, 384.5], [421, 386.5], [487, 390], [625, 392.3]],
      },
    ],
  },
];

export default function App() {
  return (
    <>
      <GlobalStyle />
      <Desktop>
        {panels.map((p) => (
          <HistogramWindow key={p.tab} {...p} />
        ))}
      </Desktop>
    </>
  );
}
